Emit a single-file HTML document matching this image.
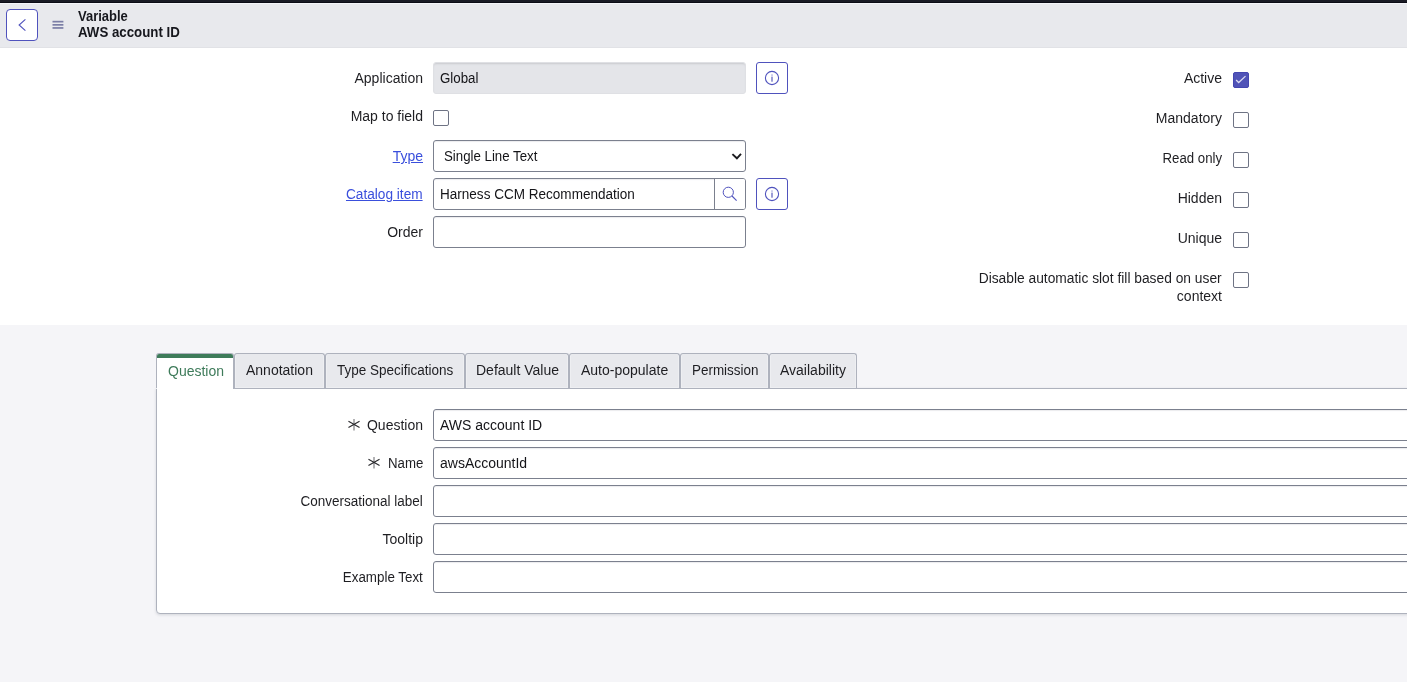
<!DOCTYPE html>
<html><head><meta charset="utf-8">
<style>
*{box-sizing:border-box;margin:0;padding:0}
html,body{width:1407px;height:682px;overflow:hidden;background:#f5f5f8}
body{font-family:"Liberation Sans",sans-serif;font-size:14px;color:#2e2e2e;position:relative;-webkit-font-smoothing:antialiased}
#wrap{position:absolute;left:0;top:0;width:1407px;height:682px;will-change:transform}
.abs{position:absolute}
.t1{position:absolute;left:78px;font-weight:bold;font-size:15px;color:#16171d;white-space:nowrap;line-height:16px;transform-origin:0 0}
.lbl{position:absolute;text-align:right;white-space:nowrap;font-size:14px;color:#1e1e22;line-height:16px;transform-origin:100% 0}
.inp{position:absolute;border:1px solid #7b808e;border-radius:3px;background:#fff;height:32px;box-shadow:inset 0 2px 1px -1px #ececee}
.itxt{position:absolute;font-size:14px;color:#141418;white-space:nowrap;line-height:16px;transform-origin:0 0}
.cb{position:absolute;width:16px;height:16px;border:1px solid #6e7384;border-radius:2px;background:#fff}
.ibtn{position:absolute;width:32px;height:32px;border:1px solid #4f52bd;border-radius:3px;background:#fff}
.lnk{color:#3a4fdc;text-decoration:underline;text-underline-offset:1px}
.tab{position:absolute;top:353px;height:35px;border:1px solid #aeb2bd;border-bottom:none;border-radius:3px 3px 0 0;background:#e8e9ed;box-shadow:inset 1px 0 0 #eeeff2,inset -1px 0 0 #eeeff2,inset 0 -1px 0 #eeeff2;font-size:14px;color:#1e1e22;white-space:nowrap}
.tab span{position:absolute;top:8px;left:11px;line-height:16px;transform-origin:0 0}
.ast{position:absolute;width:12px;height:13px}
</style></head><body><div id="wrap">
<div class="abs" style="left:0;top:0;width:1407px;height:2px;background:#1a1b25"></div>
<div class="abs" style="left:0;top:2px;width:1407px;height:1px;background:#0c0c16"></div>
<div class="abs" style="left:0;top:3px;width:1407px;height:45px;background:#e8e9ed"></div>
<div class="abs" style="left:0;top:3px;width:1407px;height:1px;background:#f4f5f9"></div>
<div class="abs" style="left:0;top:47px;width:1407px;height:1px;background:#e1e2e6"></div>
<div class="abs" style="left:6px;top:9px;width:32px;height:32px;border:1px solid #4f52bd;border-radius:4px;background:#fff"></div>
<svg class="abs" style="left:0;top:0" width="40" height="45"><path d="M25.4 19.3 L19.1 25 L25.4 30.7" fill="none" stroke="#4f52bd" stroke-width="1.1"/></svg>
<svg class="abs" style="left:52px;top:20px" width="14" height="10"><rect x="0.5" y="0.8" width="10.9" height="1.7" fill="#7b7ea6"/><rect x="0.5" y="4" width="10.9" height="1.7" fill="#7b7ea6"/><rect x="0.5" y="7.1" width="10.9" height="1.7" fill="#7b7ea6"/></svg>
<div class="t1" style="top:8px;transform:scaleX(0.866)">Variable</div>
<div class="t1" style="top:24px;transform:scaleX(0.885)">AWS account ID</div>

<div class="abs" style="left:0;top:48px;width:1407px;height:277px;background:#fff"></div>
<!-- left fields -->
<div class="lbl" style="right:984px;top:70px">Application</div>
<div class="inp" style="left:433px;top:62px;width:313px;background:#e4e5e9;border-color:#dfe0e4;box-shadow:inset 0 2px 2px -1px #c9cacf"></div>
<div class="itxt" style="left:440px;top:70px;transform:scaleX(0.95)">Global</div>
<div class="ibtn" style="left:756px;top:62px"></div>
<svg class="abs" style="left:756px;top:62px" width="32" height="32"><circle cx="16" cy="16" r="6.6" fill="none" stroke="#4f52bd" stroke-width="1.1"/><rect x="15.1" y="12.2" width="1.8" height="2.6" fill="#c9caeb"/><rect x="15.1" y="15" width="1.8" height="4.7" fill="#9193d3"/></svg>

<div class="lbl" style="right:984px;top:108px">Map to field</div>
<div class="cb" style="left:433px;top:110px"></div>

<div class="lbl lnk" style="right:984px;top:148px">Type</div>
<div class="inp" style="left:433px;top:140px;width:313px"></div>
<div class="itxt" style="left:444px;top:148px;transform:scaleX(0.947)">Single Line Text</div>
<svg class="abs" style="left:720px;top:140px" width="30" height="32"><path d="M12.4 14.1 L16.9 18.3 L21 13.8" fill="none" stroke="#1b1b1f" stroke-width="1.9"/></svg>

<div class="lbl lnk" style="right:984px;top:186px;transform:scaleX(0.975)">Catalog item</div>
<div class="inp" style="left:433px;top:178px;width:313px"></div>
<div class="abs" style="left:714px;top:178px;width:1px;height:32px;background:#7b808e"></div>
<div class="abs" style="left:715px;top:179px;width:30px;height:30px;background:#fff;border-radius:0 2px 2px 0"></div>
<svg class="abs" style="left:714px;top:178px" width="32" height="32"><circle cx="14.3" cy="14.3" r="5.1" fill="none" stroke="#4f52bd" stroke-width="1"/><path d="M18 18 L22.6 22.6" stroke="#4f52bd" stroke-width="1.1"/></svg>
<div class="itxt" style="left:440px;top:186px;transform:scaleX(0.967)">Harness CCM Recommendation</div>
<div class="ibtn" style="left:756px;top:178px"></div>
<svg class="abs" style="left:756px;top:178px" width="32" height="32"><circle cx="16" cy="16" r="6.6" fill="none" stroke="#4f52bd" stroke-width="1.1"/><rect x="15.1" y="12.2" width="1.8" height="2.6" fill="#c9caeb"/><rect x="15.1" y="15" width="1.8" height="4.7" fill="#9193d3"/></svg>

<div class="lbl" style="right:984px;top:224px">Order</div>
<div class="inp" style="left:433px;top:216px;width:313px"></div>

<!-- right checkboxes -->
<div class="lbl" style="right:185px;top:70px">Active</div>
<div class="cb" style="left:1233px;top:72px;background:#5053b7;border-color:#4446b0"></div>
<svg class="abs" style="left:1230px;top:69px" width="22" height="22"><path d="M6.1 11 L8.7 13.5 L15.5 7.1" fill="none" stroke="#dcdcf2" stroke-width="1.3"/></svg>
<div class="lbl" style="right:185px;top:110px">Mandatory</div>
<div class="cb" style="left:1233px;top:112px"></div>
<div class="lbl" style="right:185px;top:150px;transform:scaleX(0.944)">Read only</div>
<div class="cb" style="left:1233px;top:152px"></div>
<div class="lbl" style="right:185px;top:190px">Hidden</div>
<div class="cb" style="left:1233px;top:192px"></div>
<div class="lbl" style="right:185px;top:230px">Unique</div>
<div class="cb" style="left:1233px;top:232px"></div>
<div class="lbl" style="right:185px;top:270px;transform:scaleX(0.985)">Disable automatic slot fill based on user</div>
<div class="lbl" style="right:185px;top:288px">context</div>
<div class="cb" style="left:1233px;top:272px"></div>

<!-- panel -->
<div class="abs" style="left:156px;top:388px;width:1300px;height:226px;background:#fff;border:1px solid #aeb2bd;border-radius:0 0 4px 4px;box-shadow:0 1px 3px rgba(60,70,90,0.18)"></div>
<!-- tabs -->
<div class="tab" style="left:156px;width:78px;height:36px;z-index:2;background:#fff;box-shadow:none;color:#3e7b5a"><span style="top:9px;left:11px">Question</span></div>
<div class="abs" style="left:157px;top:354px;width:76px;height:4px;background:#3e7b5a;border-radius:2px 2px 0 0;z-index:3"></div>
<div class="abs" style="left:157px;top:388px;width:76px;height:1px;background:#fff;z-index:3"></div>
<div class="abs" style="left:156px;top:388px;width:1px;height:1px;background:#eef0f3;z-index:4"></div>
<div class="tab" style="left:234px;width:91px"><span>Annotation</span></div>
<div class="tab" style="left:325px;width:140px"><span style="transform:scaleX(0.964)">Type Specifications</span></div>
<div class="tab" style="left:465px;width:104px"><span style="left:10px">Default Value</span></div>
<div class="tab" style="left:569px;width:111px"><span>Auto-populate</span></div>
<div class="tab" style="left:680px;width:89px"><span style="transform:scaleX(0.96)">Permission</span></div>
<div class="tab" style="left:769px;width:88px"><span style="left:10px">Availability</span></div>

<svg class="ast" style="left:348px;top:418px" width="12" height="13"><path d="M6 0.9 V12.5" stroke="#8a8a8e" stroke-width="1.3"/><path d="M0.46 3.23 L11.54 9.57 M0.46 9.57 L11.54 3.23" stroke="#2a2a2e" stroke-width="1.1"/></svg>
<div class="lbl" style="right:984px;top:417px">Question</div>
<div class="inp" style="left:433px;top:409px;width:1000px"></div>
<div class="itxt" style="left:440px;top:417px">AWS account ID</div>
<svg class="ast" style="left:368px;top:456px" width="12" height="13"><path d="M6 0.9 V12.5" stroke="#8a8a8e" stroke-width="1.3"/><path d="M0.46 3.23 L11.54 9.57 M0.46 9.57 L11.54 3.23" stroke="#2a2a2e" stroke-width="1.1"/></svg>
<div class="lbl" style="right:984px;top:455px;transform:scaleX(0.946)">Name</div>
<div class="inp" style="left:433px;top:447px;width:1000px"></div>
<div class="itxt" style="left:440px;top:455px">awsAccountId</div>
<div class="lbl" style="right:984px;top:493px;transform:scaleX(0.964)">Conversational label</div>
<div class="inp" style="left:433px;top:485px;width:1000px"></div>
<div class="lbl" style="right:984px;top:531px">Tooltip</div>
<div class="inp" style="left:433px;top:523px;width:1000px"></div>
<div class="lbl" style="right:984px;top:569px;transform:scaleX(0.954)">Example Text</div>
<div class="inp" style="left:433px;top:561px;width:1000px"></div>
</div></body></html>
